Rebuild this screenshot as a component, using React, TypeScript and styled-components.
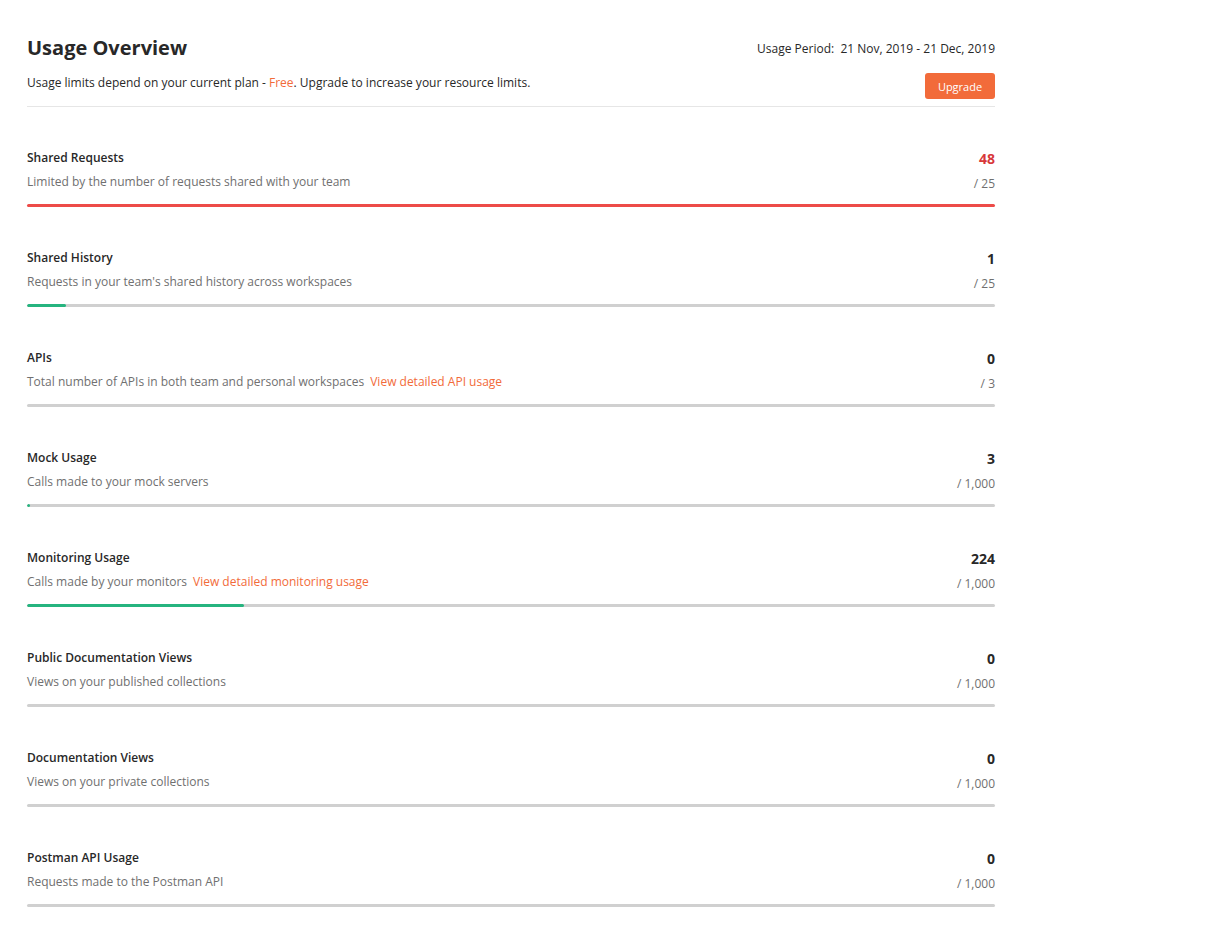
import React from "react";
import styled, { createGlobalStyle } from "styled-components";

const Global = createGlobalStyle`
  html, body { margin: 0; padding: 0; background: #ffffff; }
  body { font-family: "Open Sans", "Noto Sans", sans-serif; color: #282828; }
`;

const Page = styled.div`
  width: 968px;
  padding: 34px 0 40px 27px;
`;

const TopRow = styled.div`
  display: flex;
  justify-content: space-between;
  align-items: center;
  height: 28px;
`;

const Title = styled.h1`
  margin: 0;
  font-size: 20px;
  line-height: 28px;
  font-weight: 700;
  color: #282828;
`;

const Period = styled.div`
  font-size: 12px;
  line-height: 16px;
  padding-top: 2px;
  color: #282828;
  white-space: pre;
`;

const PlanRow = styled.div`
  display: flex;
  justify-content: space-between;
  align-items: flex-start;
  margin-top: 9px;
  padding-bottom: 7px;
  border-bottom: 1px solid #e6e6e6;
`;

const PlanText = styled.div`
  font-size: 12px;
  line-height: 24px;
  color: #282828;
`;

const Accent = styled.span`
  color: #f26b3a;
`;

const UpgradeButton = styled.button`
  margin-top: 2px;
  width: 70px;
  height: 26px;
  border: none;
  border-radius: 3px;
  background: #f26b3a;
  color: #ffffff;
  font-family: "Open Sans", sans-serif;
  font-size: 11px;
  font-weight: 400;
  padding: 0;
  cursor: pointer;
`;

const List = styled.div`
  margin-top: 39px;
  display: flex;
  flex-direction: column;
`;

const Row = styled.div`
  height: 100px;
  display: flex;
  flex-direction: column;
`;

const RowHead = styled.div`
  display: flex;
  justify-content: space-between;
`;

const LeftCol = styled.div`
  display: flex;
  flex-direction: column;
`;

const RightCol = styled.div`
  display: flex;
  flex-direction: column;
  align-items: flex-end;
  padding-top: 1px;
`;

const RowTitle = styled.div`
  font-size: 12px;
  line-height: 24px;
  font-weight: 600;
  color: #282828;
`;

const RowDesc = styled.div`
  font-size: 12px;
  line-height: 24px;
  color: #707070;
`;

const Link = styled.a`
  color: #f26b3a;
  margin-left: 6px;
  text-decoration: none;
  cursor: pointer;
`;

const Value = styled.div<{ $over: boolean }>`
  font-size: 14px;
  line-height: 24px;
  font-weight: 700;
  color: ${(p) => (p.$over ? "#d8383a" : "#282828")};
`;

const Limit = styled.div`
  margin-top: 1px;
  font-size: 12px;
  line-height: 24px;
  color: #707070;
`;

const Track = styled.div<{ $over: boolean }>`
  margin-top: 8px;
  height: 3px;
  border-radius: 2px;
  background: ${(p) => (p.$over ? "#ed4b48" : "#d0d0d0")};
  overflow: hidden;
`;

const Fill = styled.div`
  height: 100%;
  background: #26b47f;
  border-radius: 2px;
`;

type Item = {
  title: string;
  desc: string;
  link?: string;
  value: number;
  limit: number;
};

const items: Item[] = [
  { title: "Shared Requests", desc: "Limited by the number of requests shared with your team", value: 48, limit: 25 },
  { title: "Shared History", desc: "Requests in your team's shared history across workspaces", value: 1, limit: 25 },
  { title: "APIs", desc: "Total number of APIs in both team and personal workspaces", link: "View detailed API usage", value: 0, limit: 3 },
  { title: "Mock Usage", desc: "Calls made to your mock servers", value: 3, limit: 1000 },
  { title: "Monitoring Usage", desc: "Calls made by your monitors", link: "View detailed monitoring usage", value: 224, limit: 1000 },
  { title: "Public Documentation Views", desc: "Views on your published collections", value: 0, limit: 1000 },
  { title: "Documentation Views", desc: "Views on your private collections", value: 0, limit: 1000 },
  { title: "Postman API Usage", desc: "Requests made to the Postman API", value: 0, limit: 1000 },
];

const fmt = (n: number) => n.toLocaleString("en-US");

export default function App() {
  return (
    <>
      <Global />
      <Page>
        <TopRow>
          <Title>Usage Overview</Title>
          <Period>{"Usage Period:  21 Nov, 2019 - 21 Dec, 2019"}</Period>
        </TopRow>
        <PlanRow>
          <PlanText>
            Usage limits depend on your current plan - <Accent>Free</Accent>. Upgrade to increase your resource limits.
          </PlanText>
          <UpgradeButton>Upgrade</UpgradeButton>
        </PlanRow>
        <List>
          {items.map((it) => {
            const over = it.value > it.limit;
            const pct = Math.min(100, (it.value / it.limit) * 100);
            return (
              <Row key={it.title}>
                <RowHead>
                  <LeftCol>
                    <RowTitle>{it.title}</RowTitle>
                    <RowDesc>
                      {it.desc}
                      {it.link && <Link>{it.link}</Link>}
                    </RowDesc>
                  </LeftCol>
                  <RightCol>
                    <Value $over={over}>{fmt(it.value)}</Value>
                    <Limit>/ {fmt(it.limit)}</Limit>
                  </RightCol>
                </RowHead>
                <Track $over={over}>
                  {!over && <Fill style={{ width: `${pct}%` }} />}
                </Track>
              </Row>
            );
          })}
        </List>
      </Page>
    </>
  );
}
